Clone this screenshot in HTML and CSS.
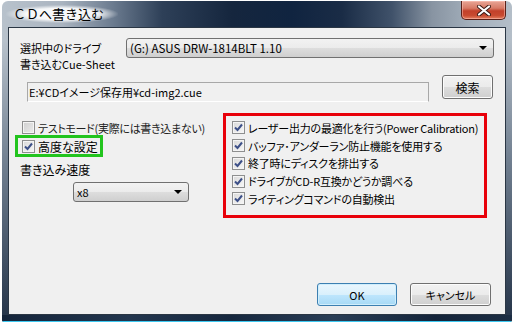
FILE: index.html
```html
<!DOCTYPE html>
<html lang="ja">
<head>
    <meta charset="UTF-8">
    <title>ＣＤへ書き込む</title>
    <link rel="stylesheet" href="styles.css">
</head>
<body>

    <div class="window">
        <div class="titlebar">
            <span class="title">ＣＤへ書き込む</span>
            <span class="close">
                <svg width="16" height="11" viewBox="0 0 16 11">
                    <path d="M3 1.5 L13 9.5 M13 1.5 L3 9.5" stroke="#3a1a14" stroke-width="4" stroke-linecap="round"/>
                    <path d="M3 1.5 L13 9.5 M13 1.5 L3 9.5" stroke="#fff" stroke-width="2.2" stroke-linecap="round"/>
                </svg>
            </span>
        </div>

        <div class="client">
            <div class="drive-row">
                <span class="label drive-label">選択中のドライブ</span>
                <div class="combo drive-combo">
                    <span>(G:) ASUS DRW-1814BLT 1.10</span>
                    <span class="arrow"></span>
                </div>
            </div>

            <div class="label sheet-label">書き込むCue-Sheet</div>

            <div class="file-row">
                <div class="path">E:¥CDイメージ保存用¥cd-img2.cue</div>
                <button class="btn search">検索</button>
            </div>

            <div class="options">
                <div class="left-col">
                    <div class="check test-mode"><span class="box"></span>テストモード(実際には書き込まない)</div>
                    <div class="check advanced">
                        <span class="box"><svg width="11" height="11" viewBox="0 0 11 11"><path d="M2 5.5 L4.5 8 L9 2.5" fill="none" stroke="#3d5088" stroke-width="2"/></svg></span>高度な設定
                    </div>
                    <div class="label speed-label">書き込み速度</div>
                    <div class="combo speed-combo">
                        <span>x8</span>
                        <span class="arrow"></span>
                    </div>
                </div>

                <div class="adv-box">
                    <div class="check"><span class="box"><svg width="11" height="11" viewBox="0 0 11 11"><path d="M2 5.5 L4.5 8 L9 2.5" fill="none" stroke="#3d5088" stroke-width="2"/></svg></span>レーザー出力の最適化を行う(Power Calibration)</div>
                    <div class="check"><span class="box"><svg width="11" height="11" viewBox="0 0 11 11"><path d="M2 5.5 L4.5 8 L9 2.5" fill="none" stroke="#3d5088" stroke-width="2"/></svg></span>バッファ･アンダーラン防止機能を使用する</div>
                    <div class="check"><span class="box"><svg width="11" height="11" viewBox="0 0 11 11"><path d="M2 5.5 L4.5 8 L9 2.5" fill="none" stroke="#3d5088" stroke-width="2"/></svg></span>終了時にディスクを排出する</div>
                    <div class="check"><span class="box"><svg width="11" height="11" viewBox="0 0 11 11"><path d="M2 5.5 L4.5 8 L9 2.5" fill="none" stroke="#3d5088" stroke-width="2"/></svg></span>ドライブがCD-R互換かどうか調べる</div>
                    <div class="check"><span class="box"><svg width="11" height="11" viewBox="0 0 11 11"><path d="M2 5.5 L4.5 8 L9 2.5" fill="none" stroke="#3d5088" stroke-width="2"/></svg></span>ライティングコマンドの自動検出</div>
                </div>
            </div>

            <div class="buttons">
                <button class="btn ok">OK</button>
                <button class="btn">キャンセル</button>
            </div>
        </div>

        <div class="frame-bottom"></div>
    </div>

</body>
</html>
```

FILE: styles.css
```css
body {
    margin: 0;
    background-color: #fff;
    font-family: "Noto Sans CJK JP", sans-serif;
    font-size: 11px;
    font-feature-settings: "palt";
    color: #000;
}
.window {
    margin: 1px 0 0 2px;
    width: 510px;
    height: 321px;
    border-radius: 6px 6px 2px 2px;
    overflow: hidden;
    background:
        linear-gradient(to bottom, rgba(0,0,0,0) 0px, rgba(0,0,0,0) 40px, rgba(30,50,75,0.45) 160px, rgba(20,36,58,0.9) 100%),
        linear-gradient(to right, #b8c2cc 0px, #aab4c0 60px, #6c7c90 110px, #2e4058 160px, #15263e 230px, #102440 290px, #1a2c46 340px, #40526a 390px, #8894a2 430px, #a4b0bc 470px, #b4bec8 510px);
}
.titlebar {
    height: 26px;
    display: flex;
}
.title {
    margin: 4px 0 0 4px;
    padding: 0 14px 0 7px;
    height: 18px;
    line-height: 18px;
    font-size: 13px;
    font-feature-settings: normal;
    background: radial-gradient(ellipse at center, rgba(255,255,255,0.9) 45%, rgba(255,255,255,0) 72%);
}
.close {
    margin: 0 6px 0 auto;
    width: 45px;
    height: 19px;
    box-sizing: border-box;
    border: 1px solid #5a2018;
    border-top: none;
    border-radius: 0 0 5px 5px;
    background: linear-gradient(to bottom, #e8a595 0%, #d77a66 40%, #c2412a 55%, #c84a30 80%, #e48060 100%);
    box-shadow: inset 0 0 0 1px rgba(255,200,190,0.5);
    display: flex;
    align-items: center;
    justify-content: center;
}
.client {
    margin: 0 6px;
    height: 288px;
    box-sizing: border-box;
    border: 1px solid #2a3644;
    background-color: #f0f0f0;
    padding: 0 11px 8px 11px;
    display: flex;
    flex-direction: column;
}
.label {
    line-height: 14px;
    height: 14px;
}
.drive-row {
    display: flex;
    align-items: center;
    margin-top: 10px;
    height: 20px;
}
.drive-label {
    width: 106px;
}
.combo {
    height: 20px;
    box-sizing: border-box;
    border: 1px solid #707070;
    border-radius: 3px;
    background: linear-gradient(to bottom, #f2f2f2 0%, #ebebeb 50%, #dddddd 51%, #cfcfcf 100%);
    display: flex;
    align-items: center;
    padding-left: 3px;
    line-height: 18px;
}
.combo .arrow {
    margin-left: auto;
    margin-right: 6px;
    width: 0;
    height: 0;
    border-left: 4px solid transparent;
    border-right: 4px solid transparent;
    border-top: 4px solid #000;
}
.drive-combo {
    flex: 1;
    font-size: 11.5px;
}
.sheet-label {
    height: 12px;
    line-height: 12px;
    margin-top: 0;
}
.file-row {
    display: flex;
    align-items: flex-start;
    margin-top: 5px;
}
.path {
    margin: 7px 0 0 7px;
    width: 402px;
    height: 20px;
    box-sizing: border-box;
    border: 1px solid #a8a8a8;
    border-bottom-color: #fff;
    line-height: 18px;
    padding-left: 1px;
}
.btn {
    font-family: "Noto Sans CJK JP", sans-serif;
    font-size: 11px;
    font-feature-settings: "palt";
    color: #000;
    height: 24px;
    padding: 0;
    border: 1px solid #707070;
    border-radius: 3px;
    background: linear-gradient(to bottom, #f2f2f2 0%, #ebebeb 50%, #dddddd 51%, #cfcfcf 100%);
    box-shadow: inset 0 0 0 1px #fcfcfc;
}
.search {
    margin-left: 13px;
    width: 51px;
    font-size: 12px;
}
.options {
    display: flex;
    margin-top: 11px;
}
.left-col {
    width: 203px;
    padding-top: 7px;
}
.check {
    display: flex;
    align-items: center;
    white-space: nowrap;
}
.box {
    width: 13px;
    height: 13px;
    box-sizing: border-box;
    border: 1px solid #8e8f8f;
    background: linear-gradient(135deg, #d8d8d8, #f8f8f8);
    box-shadow: inset 0 0 0 1px #f4f4f4;
    display: flex;
    align-items: center;
    justify-content: center;
    margin-right: 3px;
    flex: none;
}
.test-mode {
    height: 15px;
    margin-left: 2px;
    color: #222;
    letter-spacing: -0.3px;
}
.test-mode .box {
    background: linear-gradient(135deg, #cfcfcf, #ececec);
}
.advanced {
    margin-left: -5px;
    width: 88px;
    height: 22px;
    box-sizing: border-box;
    border: 3px solid #22c41e;
    padding-left: 4px;
    font-size: 12px;
}
.speed-label {
    margin-top: 6px;
    font-size: 12px;
}
.speed-combo {
    margin: 5px 0 0 53px;
    width: 116px;
}
.adv-box {
    width: 264px;
    height: 105px;
    box-sizing: border-box;
    border: 3px solid #e8000a;
    padding: 3px 0 0 6px;
    letter-spacing: -0.2px;
}
.adv-box .check {
    height: 17.75px;
}
.buttons {
    margin-top: auto;
    display: flex;
    justify-content: flex-end;
    gap: 13px;
    padding-right: 3px;
}
.buttons .btn {
    height: 23px;
    width: 81px;
}
.buttons .ok {
    width: 80px;
    border-color: #3c7fb1;
    background: linear-gradient(to bottom, #eaf6fd 0%, #d9f0fc 50%, #bee6fd 51%, #a7d9f5 100%);
    box-shadow: inset 0 0 0 1px #d0eefc;
}
.frame-bottom {
    height: 7px;
    box-sizing: border-box;
    border-bottom: 1px solid #3cc8f0;
    background: linear-gradient(to right, #14243a 0%, #23364e 25%, #16273e 45%, #2a3e56 65%, #14243a 85%, #1c2e44 100%);
}
```
